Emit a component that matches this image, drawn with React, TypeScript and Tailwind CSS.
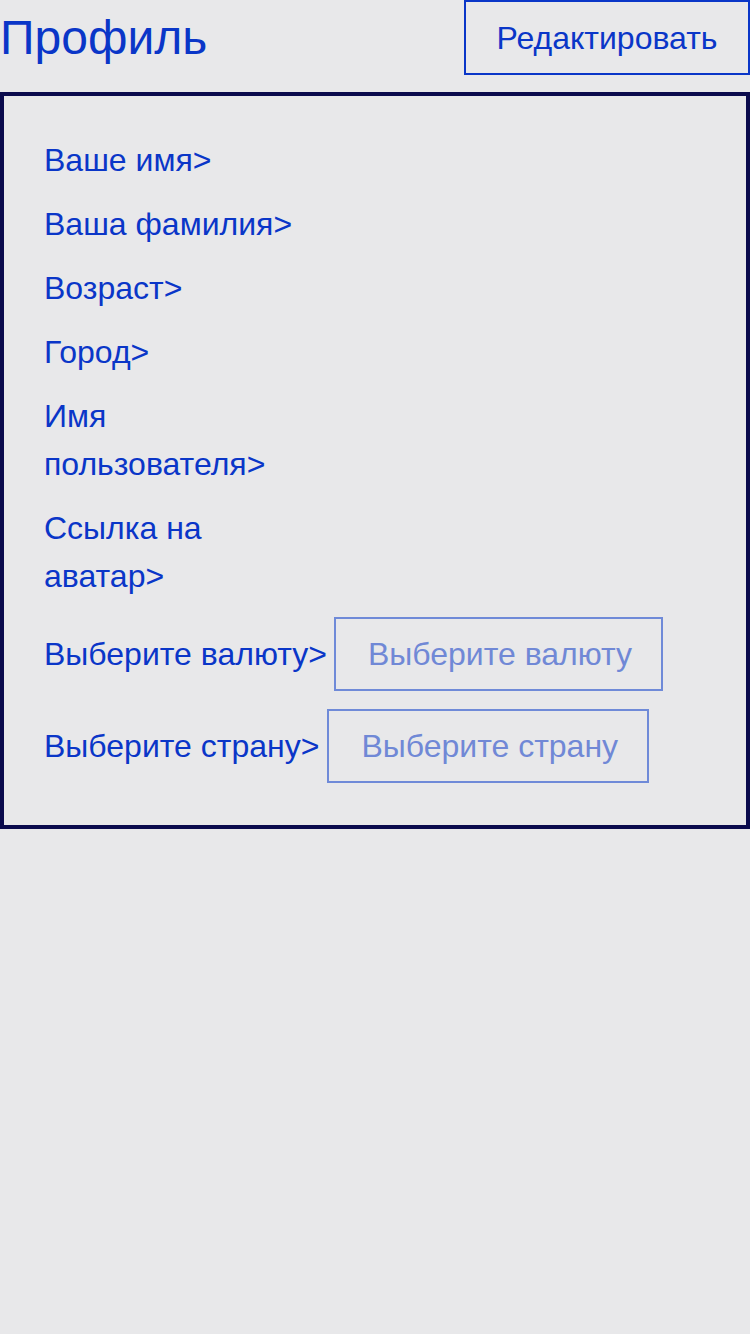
import React from 'react';

const fields = ['Ваше имя>', 'Ваша фамилия>', 'Возраст>', 'Город>', 'Имя пользователя>', 'Ссылка на аватар>'];

function SelectBox({ label }: { label: string }) {
  return (
    <div className="h-[74px] flex items-center pl-8 pr-[29px] border-2 border-[#6f8ad8] text-[#7088d6] whitespace-nowrap">
      {label}
    </div>
  );
}

export default function App() {
  return (
    <div
      className="min-h-screen bg-[#e8e8ea] text-[#0a36c8]"
      style={{ fontFamily: '"Liberation Sans", Arial, sans-serif' }}
    >
      {/* Header */}
      <div className="h-[75px] flex items-center justify-between mb-[17px]">
        <h1 className="text-[48px] leading-none font-normal">Профиль</h1>
        <button className="h-[75px] w-[286px] border-2 border-[#0a36c8] text-[32px] text-[#0a36c8]">
          Редактировать
        </button>
      </div>

      {/* Card */}
      <div className="border-4 border-[#0b0b4d] pl-10 pt-10 pb-[41px]">
        <div className="flex flex-col gap-4 text-[32px] leading-[48px]">
          {fields.map((f) => (
            <div key={f} className="max-w-[270px]">
              {f}
            </div>
          ))}
          <div className="flex items-center gap-[7px] h-[76px]">
            <span className="whitespace-nowrap">Выберите валюту&gt;</span>
            <SelectBox label="Выберите валюту" />
          </div>
          <div className="flex items-center gap-[8px] h-[76px]">
            <span className="whitespace-nowrap">Выберите страну&gt;</span>
            <SelectBox label="Выберите страну" />
          </div>
        </div>
      </div>
    </div>
  );
}
